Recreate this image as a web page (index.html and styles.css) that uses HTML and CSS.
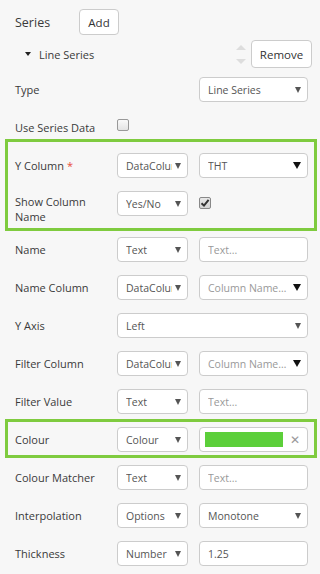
FILE: index.html
```html
<!doctype html>
<html lang="en">
<head>
<meta charset="utf-8">
<meta name="viewport" content="width=device-width, initial-scale=1">
<title>Series</title>
<link rel="stylesheet" href="styles.css">
</head>
<body>
<div class="panel">
	<div class="head">
		<span class="title">Series</span>
		<button class="btn btn-add">Add</button>
	</div>
	<div class="item">
		<span class="caret"></span>
		<span class="item-name">Line Series</span>
		<span class="order"><span class="up"></span><span class="down"></span></span>
		<button class="btn btn-remove">Remove</button>
	</div>

	<div class="row">
		<span class="lbl">Type</span>
		<div class="sel c3"><span class="val">Line Series</span><span class="arr"></span></div>
	</div>
	<div class="row">
		<span class="lbl">Use Series Data</span>
		<span class="chk"></span>
	</div>

	<div class="hl hl-1">
		<div class="row">
			<span class="lbl">Y Column <span class="req">*</span></span>
			<div class="sel"><span class="val">DataColumn</span><span class="arr"></span></div>
			<div class="sel"><span class="val">THT</span><span class="arr arr-dark"></span></div>
		</div>
		<div class="row">
			<span class="lbl lbl-2">Show Column Name</span>
			<div class="sel"><span class="val">Yes/No</span><span class="arr"></span></div>
			<span class="chk chk-on">
				<svg width="10" height="10" viewBox="0 0 10 10"><path d="M1.5 5.2 L4 7.6 L8.6 1.8" fill="none" stroke="#333" stroke-width="2"/></svg>
			</span>
		</div>
	</div>

	<div class="row">
		<span class="lbl">Name</span>
		<div class="sel"><span class="val">Text</span><span class="arr"></span></div>
		<div class="sel inp"><span class="val ph">Text...</span></div>
	</div>
	<div class="row">
		<span class="lbl">Name Column</span>
		<div class="sel"><span class="val">DataColumn</span><span class="arr"></span></div>
		<div class="sel"><span class="val ph">Column Name…</span><span class="arr arr-dark"></span></div>
	</div>
	<div class="row">
		<span class="lbl">Y Axis</span>
		<div class="sel wide"><span class="val">Left</span><span class="arr"></span></div>
	</div>
	<div class="row">
		<span class="lbl">Filter Column</span>
		<div class="sel"><span class="val">DataColumn</span><span class="arr"></span></div>
		<div class="sel"><span class="val ph">Column Name…</span><span class="arr arr-dark"></span></div>
	</div>
	<div class="row">
		<span class="lbl">Filter Value</span>
		<div class="sel"><span class="val">Text</span><span class="arr"></span></div>
		<div class="sel inp"><span class="val ph">Text...</span></div>
	</div>

	<div class="hl hl-2">
		<div class="row">
			<span class="lbl">Colour</span>
			<div class="sel"><span class="val">Colour</span><span class="arr"></span></div>
			<div class="sel colour"><span class="swatch"></span><span class="clear">&#x2715;</span></div>
		</div>
	</div>

	<div class="row">
		<span class="lbl">Colour Matcher</span>
		<div class="sel"><span class="val">Text</span><span class="arr"></span></div>
		<div class="sel inp"><span class="val ph">Text...</span></div>
	</div>
	<div class="row">
		<span class="lbl">Interpolation</span>
		<div class="sel"><span class="val">Options</span><span class="arr"></span></div>
		<div class="sel"><span class="val">Monotone</span><span class="arr"></span></div>
	</div>
	<div class="row">
		<span class="lbl">Thickness</span>
		<div class="sel"><span class="val">Number</span><span class="arr"></span></div>
		<div class="sel inp"><span class="val">1.25</span></div>
	</div>
</div>
</body>
</html>
```

FILE: styles.css
```css
*
{
	margin: 0;
	padding: 0;
	box-sizing: border-box;
}
body
{
	font-family: "Open Sans", "Noto Sans", sans-serif;
	font-size: 11px;
	color: #3a3a3a;
	background-color: #f7f7f7;
	width: 320px;
	height: 574px;
	overflow: hidden;
}
.panel
{
	padding: 9px 12px 0 15px;
}
.head
{
	display: flex;
	align-items: center;
	height: 26px;
}
.title
{
	width: 64px;
	font-size: 12.5px;
}
.btn
{
	font-family: inherit;
	font-size: 11.5px;
	color: #333;
	background-color: #fff;
	border: 1px solid #ccc;
	border-radius: 4px;
}
.btn-add
{
	width: 40px;
	height: 26px;
}
.btn-remove
{
	width: 61px;
	height: 28px;
	margin-left: 5px;
}
.item
{
	display: flex;
	align-items: center;
	height: 28px;
	margin-top: 5px;
	margin-right: -4px;
	padding-left: 10px;
}
.caret
{
	width: 0;
	height: 0;
	border-left: 3px solid transparent;
	border-right: 3px solid transparent;
	border-top: 4px solid #222;
}
.item-name
{
	margin-left: 8px;
}
.order
{
	margin-left: auto;
	display: flex;
	flex-direction: column;
	gap: 9px;
}
.up, .down
{
	width: 0;
	height: 0;
	border-left: 5px solid transparent;
	border-right: 5px solid transparent;
}
.up
{
	border-bottom: 5px solid #ddd;
}
.down
{
	border-top: 5px solid #ddd;
}

.row
{
	display: grid;
	grid-template-columns: 91px 71px 109px;
	column-gap: 11px;
	align-items: start;
	margin-top: 13px;
}
.item + .row
{
	margin-top: 9px;
}
.hl > .row:first-child
{
	margin-top: 0;
}
.lbl
{
	line-height: 25px;
	white-space: nowrap;
}
.lbl-2
{
	white-space: normal;
	line-height: 15px;
	padding-top: 3px;
}
.req
{
	color: #e74c3c;
}

.sel
{
	height: 25px;
	display: flex;
	align-items: center;
	background-color: #fff;
	border: 1px solid #ccc;
	border-radius: 4px;
	padding: 0 6px 0 8px;
	color: #555;
	font-size: 10.5px;
}
.val
{
	flex: 1;
	overflow: hidden;
	white-space: nowrap;
}
.ph
{
	color: #999;
}
.arr
{
	flex: none;
	width: 0;
	height: 0;
	margin-left: 3px;
	border-left: 3.5px solid transparent;
	border-right: 3.5px solid transparent;
	border-top: 6px solid #555;
}
.arr-dark
{
	border-left-width: 4px;
	border-right-width: 4px;
	border-top: 7px solid #111;
}
.c3
{
	grid-column: 3;
}
.wide
{
	grid-column: 2 / 4;
}

.chk
{
	width: 12px;
	height: 12px;
	margin-top: 4px;
	border: 1px solid #999;
	border-radius: 2px;
	background: linear-gradient(#fafafa, #e4e4e4);
	display: flex;
	align-items: center;
	justify-content: center;
}
.chk-on
{
	margin-top: 6px;
	background: linear-gradient(#e8e8e8, #d4d4d4);
	border-color: #888;
}

.hl
{
	border: 3px solid #7fcb3f;
	margin-left: -10px;
	margin-right: -9px;
	padding-left: 7px;
	padding-right: 6px;
}
.hl-1
{
	margin-top: -1px;
	padding-top: 11px;
	padding-bottom: 4px;
	margin-bottom: -7px;
}
.hl-2
{
	margin-top: 5px;
	padding-top: 5px;
	padding-bottom: 3px;
	margin-bottom: -6px;
}
.colour
{
	padding-left: 5px;
}
.swatch
{
	width: 78px;
	height: 15px;
	background-color: #5ccf3a;
}
.clear
{
	margin-left: auto;
	margin-right: 1px;
	color: #999;
	font-size: 12px;
}
```
